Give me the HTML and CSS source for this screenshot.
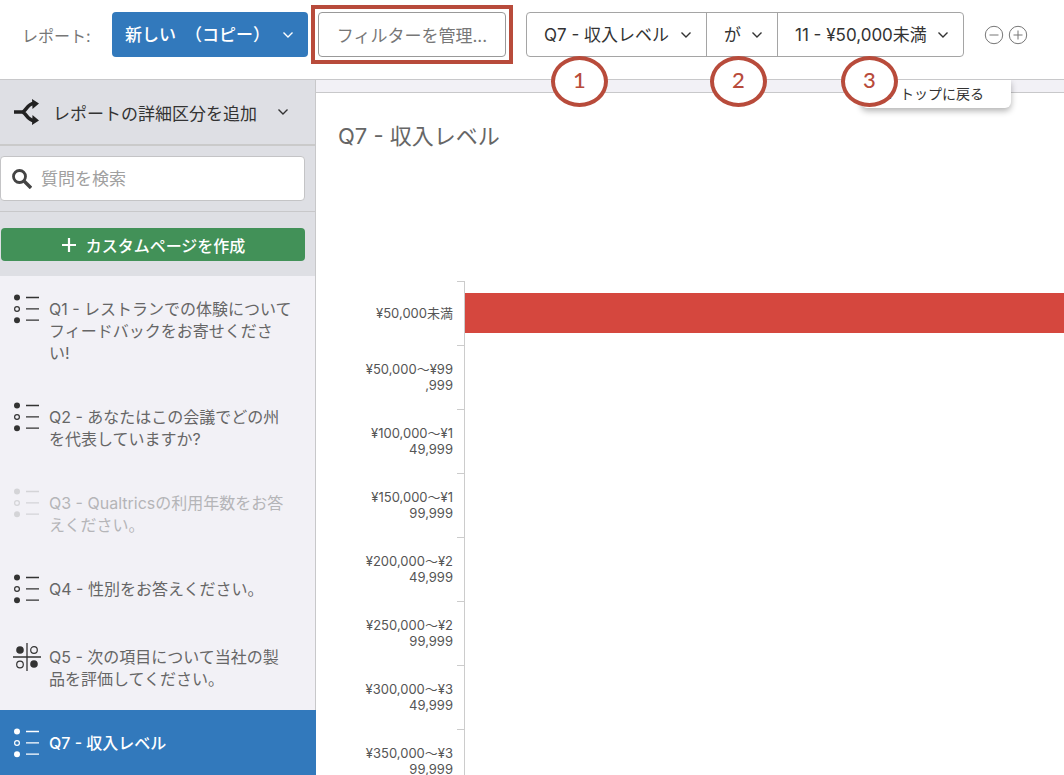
FILE: index.html
```html
<!DOCTYPE html>
<html lang="ja">
<head>
  <meta charset="UTF-8">
  <meta name="viewport" content="width=device-width, initial-scale=1.0">
  <title>レポート - Q7 収入レベル</title>
  <link rel="stylesheet" href="styles.css">
</head>
<body>
  <!-- Icons used more than once -->
  <svg class="sprite" aria-hidden="true">
    <symbol id="chevron" viewBox="0 0 12 8">
      <path d="M1.5 1.5L6 6L10.5 1.5" fill="none" stroke="currentColor" stroke-width="1.4"/>
    </symbol>
    <symbol id="choice" viewBox="0 0 28 30">
      <circle cx="4" cy="3.5" r="3" fill="currentColor"/>
      <circle cx="4" cy="15" r="2.4" fill="none" stroke="currentColor" stroke-width="1.2"/>
      <circle cx="4" cy="26.2" r="3" fill="currentColor"/>
      <path d="M13 3.5H26M13 14.8H26M13 26.2H26" stroke="currentColor" stroke-width="1.3"/>
    </symbol>
    <symbol id="matrix" viewBox="0 0 28 30">
      <path d="M14 1V29M0 15H28" stroke="currentColor" stroke-width="1.3"/>
      <circle cx="7" cy="8" r="3.8" fill="currentColor"/>
      <circle cx="21" cy="8" r="3.3" fill="none" stroke="currentColor" stroke-width="1.2"/>
      <circle cx="7" cy="22.5" r="3.3" fill="none" stroke="currentColor" stroke-width="1.2"/>
      <circle cx="21" cy="22" r="3.8" fill="currentColor"/>
    </symbol>
  </svg>

  <header class="topbar">
    <label class="topbar-label" for="report">レポート:</label>
    <div class="dropdown report-dropdown">
      <select id="report"><option>新しい &nbsp;（コピー）</option></select>
      <svg class="chevron"><use href="#chevron"/></svg>
    </div>
    <div class="highlight">
      <button class="manage-filter" type="button">フィルターを管理...</button>
    </div>

    <div class="filter-group">
      <div class="dropdown">
        <select aria-label="質問"><option>Q7 - 収入レベル</option></select>
        <svg class="chevron"><use href="#chevron"/></svg>
        <span class="step step-1">1</span>
      </div>
      <div class="dropdown">
        <select aria-label="条件"><option>が</option></select>
        <svg class="chevron"><use href="#chevron"/></svg>
        <span class="step step-2">2</span>
      </div>
      <div class="dropdown">
        <select aria-label="値"><option>11 - ¥50,000未満</option></select>
        <svg class="chevron"><use href="#chevron"/></svg>
        <span class="step step-3">3</span>
      </div>
    </div>

    <div class="filter-actions">
      <button type="button" aria-label="条件を削除">
        <svg viewBox="0 0 20 20"><circle cx="10" cy="10" r="8.7"/><path d="M5.5 10H14.5"/></svg>
      </button>
      <button type="button" aria-label="条件を追加">
        <svg viewBox="0 0 20 20"><circle cx="10" cy="10" r="8.7"/><path d="M5.5 10H14.5M10 5.5V14.5"/></svg>
      </button>
    </div>
  </header>

  <div class="layout">
    <aside class="sidebar">
      <button class="breakout" type="button">
        <svg class="breakout-icon" viewBox="0 0 26 26">
          <path d="M0 13H9M8 13C12 13 13 4.5 20 4.5M8 13C12 13 13 21.5 20 21.5" fill="none" stroke="currentColor" stroke-width="3.4"/>
          <path d="M18 0L25 4.5L18.5 10ZM18 26L25 21.5L18.5 16Z" fill="currentColor"/>
        </svg>
        <span>レポートの詳細区分を追加</span>
        <svg class="chevron"><use href="#chevron"/></svg>
      </button>

      <div class="search-section">
        <label class="search">
          <svg class="search-icon" viewBox="0 0 20 20">
            <circle cx="7.5" cy="7.5" r="6" fill="none" stroke="currentColor" stroke-width="2.8"/>
            <path d="M12 12L19 19" stroke="currentColor" stroke-width="3.4"/>
          </svg>
          <input type="text" placeholder="質問を検索" aria-label="質問を検索">
        </label>
      </div>

      <div class="create-section">
        <button class="create-page" type="button">
          <svg viewBox="0 0 16 16"><path d="M8 1V15M1 8H15" stroke="currentColor" stroke-width="2.2"/></svg>
          カスタムページを作成
        </button>
      </div>

      <nav class="questions">
        <a class="question" href="#q1">
          <svg><use href="#choice"/></svg>
          <span>Q1 - レストランでの体験について<br>フィードバックをお寄せくださ<br>い!</span>
        </a>
        <a class="question" href="#q2">
          <svg><use href="#choice"/></svg>
          <span>Q2 - あなたはこの会議でどの州<br>を代表していますか?</span>
        </a>
        <a class="question muted" href="#q3">
          <svg><use href="#choice"/></svg>
          <span>Q3 - Qualtricsの利用年数をお答<br>えください。</span>
        </a>
        <a class="question" href="#q4">
          <svg><use href="#choice"/></svg>
          <span>Q4 - 性別をお答えください。</span>
        </a>
        <a class="question" href="#q5">
          <svg><use href="#matrix"/></svg>
          <span>Q5 - 次の項目について当社の製<br>品を評価してください。</span>
        </a>
        <a class="question active" href="#q7">
          <svg><use href="#choice"/></svg>
          <span>Q7 - 収入レベル</span>
        </a>
      </nav>
    </aside>

    <main class="content">
      <a class="back-to-top" href="#top">↑ トップに戻る</a>
      <section class="report-page">
        <h1>Q7 - 収入レベル</h1>
        <div class="chart">
          <div class="row"><div class="row-label">¥50,000未満</div><div class="row-track"><div class="bar"></div></div></div>
          <div class="row"><div class="row-label">¥50,000～¥99<br>,999</div><div class="row-track"></div></div>
          <div class="row"><div class="row-label">¥100,000～¥1<br>49,999</div><div class="row-track"></div></div>
          <div class="row"><div class="row-label">¥150,000～¥1<br>99,999</div><div class="row-track"></div></div>
          <div class="row"><div class="row-label">¥200,000～¥2<br>49,999</div><div class="row-track"></div></div>
          <div class="row"><div class="row-label">¥250,000～¥2<br>99,999</div><div class="row-track"></div></div>
          <div class="row"><div class="row-label">¥300,000～¥3<br>49,999</div><div class="row-track"></div></div>
          <div class="row"><div class="row-label">¥350,000～¥3<br>99,999</div><div class="row-track"></div></div>
        </div>
      </section>
    </main>
  </div>
</body>
</html>
```

FILE: styles.css
```css
* {
  box-sizing: border-box;
}

body {
  margin: 0;
  height: 100vh;
  display: flex;
  flex-direction: column;
  overflow: hidden;
  font-family: Inter, "Noto Sans CJK JP", sans-serif;
  font-size: 17px;
  color: #333;
  background: #fff;
}

button,
input,
select {
  font: inherit;
  color: inherit;
}

button {
  cursor: pointer;
}

.sprite {
  position: absolute;
  width: 0;
  height: 0;
}

/* Top bar */
.topbar {
  display: flex;
  flex-shrink: 0;
  align-items: center;
  padding: 5px 20px 15px 22px;
  border-bottom: 1px solid #c8c8ca;
  white-space: nowrap;
}

.topbar-label {
  width: 90px;
  color: #777;
  font-size: 16px;
}

.dropdown {
  position: relative;
  display: flex;
  align-items: center;
}

.dropdown select {
  appearance: none;
  height: 43px;
  padding: 0 36px 0 17px;
  border: none;
  background: transparent;
}

.chevron {
  width: 12px;
  height: 8px;
}

.dropdown .chevron {
  position: absolute;
  right: 14px;
  pointer-events: none;
}

.report-dropdown {
  width: 196px;
  border-radius: 4px;
  background: #3279bc;
  color: #fff;
  font-weight: 500;
}

.report-dropdown select {
  width: 100%;
  height: 45px;
  padding-left: 13px;
}

.report-dropdown option {
  color: #333;
}

/* Red frame that points out the filter button */
.highlight {
  margin: 0 13px 0 3px;
  padding: 3px;
  border: 4px solid #b84b3b;
}

.manage-filter {
  display: block;
  height: 45px;
  width: 188px;
  padding: 0 16px;
  border: 1px solid #999;
  border-radius: 4px;
  background: #fff;
  color: #777;
}

.filter-group {
  display: flex;
  border: 1px solid #a5a5a5;
  border-radius: 4px;
}

.filter-group .dropdown + .dropdown {
  border-left: 1px solid #a5a5a5;
}

.filter-actions {
  display: flex;
  gap: 4px;
  margin-left: 20px;
}

.filter-actions button {
  display: flex;
  padding: 0;
  border: none;
  background: none;
  color: #777;
}

.filter-actions svg {
  width: 20px;
  height: 20px;
  fill: none;
  stroke: currentColor;
}

/* Numbered callouts hanging below the filter fields */
.step {
  position: absolute;
  z-index: 2;
  top: 43px;
  width: 57px;
  height: 51px;
  border: 4px solid #b84b3b;
  border-radius: 50%;
  background: #fff;
  color: #b84b3b;
  font: 500 22px/40px Lato, sans-serif;
  text-align: center;
}

.step-1 {
  left: 24px;
}

.step-2 {
  left: 3px;
}

.step-3 {
  left: 63px;
}

.layout {
  display: flex;
  flex: 1;
  min-height: 0;
}

/* Sidebar */
.sidebar {
  display: flex;
  flex-direction: column;
  flex-shrink: 0;
  width: 316px;
  border-right: 1px solid #c8c8ca;
  background: #f2f1f6;
}

.breakout {
  display: flex;
  flex-shrink: 0;
  align-items: center;
  height: 66px;
  padding: 0 14px;
  border: none;
  border-bottom: 2px solid #cacaca;
  background: #dedfe4;
  text-align: left;
}

.breakout-icon {
  width: 26px;
  height: 26px;
  margin-right: 13px;
  color: #222;
}

.breakout .chevron {
  margin-left: 20px;
}

.search-section {
  padding: 10px 10px 10px 0;
  border-bottom: 1px solid #c8c8ca;
  background: #dedfe4;
}

.search {
  display: flex;
  align-items: center;
  height: 45px;
  padding: 0 11px;
  border: 1px solid #c4c4c6;
  border-radius: 4px;
  background: #fff;
}

.search-icon {
  flex-shrink: 0;
  width: 20px;
  height: 20px;
  margin-right: 9px;
  color: #444;
}

.search input {
  width: 100%;
  min-width: 0;
  padding: 0;
  border: none;
  outline: none;
  background: none;
}

.search input::placeholder {
  color: #a0a0a0;
}

.create-section {
  padding: 16px 10px 15px 1px;
  background: #dedfe4;
}

.create-page {
  display: flex;
  align-items: center;
  justify-content: center;
  gap: 9px;
  width: 100%;
  height: 33px;
  padding: 0;
  border: none;
  border-radius: 4px;
  background: #429158;
  color: #fff;
  font-size: 16px;
  font-weight: 500;
}

.create-page svg {
  width: 16px;
  height: 16px;
}

.question {
  display: flex;
  gap: 8px;
  padding: 18px 16px 20px 13px;
  color: #666;
  font-size: 16px;
  line-height: 22px;
  text-decoration: none;
  white-space: nowrap;
}

.question svg {
  flex-shrink: 0;
  width: 28px;
  height: 30px;
  color: #333;
}

.question span {
  padding-top: 4px;
}

.question.muted {
  color: #b5b5b8;
}

.question.muted svg {
  color: #d4d4d7;
}

.question.active {
  margin-right: -1px;
  background: #3279bc;
  color: #fff;
  font-weight: 500;
}

.question.active svg {
  color: #fff;
}

/* Report content */
.content {
  position: relative;
  flex: 1;
  min-width: 0;
  padding-top: 12px;
  background: #f2f1f6;
}

.back-to-top {
  position: absolute;
  top: 0;
  right: 53px;
  width: 150px;
  padding: 4px 27px 4px 0;
  border-radius: 0 0 6px 6px;
  background: #fff;
  box-shadow: 0 3px 6px rgba(0, 0, 0, 0.3);
  clip-path: inset(0 -8px -12px -8px);
  color: #333;
  font-size: 14px;
  line-height: 20px;
  text-align: right;
  text-decoration: none;
}

.report-page {
  height: 100%;
  padding-top: 27px;
  border-top: 1px solid #c8c8ca;
  background: #fff;
}

.report-page h1 {
  margin: 0 0 129px 22px;
  color: #666;
  font-size: 22px;
  font-weight: 400;
  line-height: 32px;
}

.row {
  display: flex;
  height: 64px;
}

.row-label {
  position: relative;
  display: flex;
  flex-direction: column;
  justify-content: center;
  width: 149px;
  padding-right: 11px;
  border-right: 1px solid #ccc;
  color: #555;
  font-size: 13px;
  line-height: 16px;
  text-align: right;
}

/* Axis tick at the top of each row */
.row-label::before {
  content: "";
  position: absolute;
  top: 0;
  right: 0;
  width: 7px;
  border-top: 1px solid #ccc;
}

.row-track {
  display: flex;
  flex: 1;
  align-items: center;
}

.bar {
  width: 100%;
  height: 40px;
  background: #d5473e;
}
```
